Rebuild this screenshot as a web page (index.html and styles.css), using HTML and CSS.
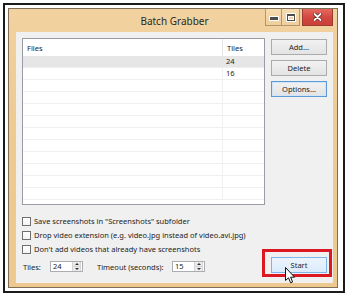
FILE: index.html
```html
<!DOCTYPE html>
<html>
<head>
<meta charset="utf-8">
<title>Batch Grabber</title>
<link rel="stylesheet" href="styles.css">
</head>
<body>
<div class="shot">
  <div class="window">
    <div class="titlebar">
      <div class="title">Batch Grabber</div>
      <div class="caption">
        <div class="cbtn cmin"><span class="min-glyph"></span></div>
        <div class="cbtn cmax"><span class="max-glyph"></span></div>
        <div class="cbtn cclose">
          <svg width="9" height="8" viewBox="0 0 9 8"><path d="M1.5 1 L7.5 7 M7.5 1 L1.5 7" stroke="#5a1d18" stroke-width="3.2" stroke-linecap="round"/><path d="M1.5 1 L7.5 7 M7.5 1 L1.5 7" stroke="#fff" stroke-width="1.8" stroke-linecap="round"/></svg>
        </div>
      </div>
    </div>
    <div class="client">
      <div class="top">
        <div class="listview">
          <div class="lv-head"><div class="c1">Files</div><div class="c2">Tiles</div></div>
          <div class="lv-row sel"><div class="c1"></div><div class="c2">24</div></div>
          <div class="lv-row"><div class="c1"></div><div class="c2">16</div></div>
          <div class="lv-row"><div class="c1"></div><div class="c2"></div></div>
          <div class="lv-row"><div class="c1"></div><div class="c2"></div></div>
          <div class="lv-row"><div class="c1"></div><div class="c2"></div></div>
          <div class="lv-row"><div class="c1"></div><div class="c2"></div></div>
          <div class="lv-row"><div class="c1"></div><div class="c2"></div></div>
          <div class="lv-row"><div class="c1"></div><div class="c2"></div></div>
          <div class="lv-row"><div class="c1"></div><div class="c2"></div></div>
          <div class="lv-row"><div class="c1"></div><div class="c2"></div></div>
          <div class="lv-row"><div class="c1"></div><div class="c2"></div></div>
          <div class="lv-row"><div class="c1"></div><div class="c2"></div></div>
        </div>
        <div class="side">
          <div class="btn">Add...</div>
          <div class="btn">Delete</div>
          <div class="btn focus">Options...</div>
        </div>
      </div>
      <div class="bottom">
        <div class="left">
          <div class="chk"><span class="box"></span><span>Save screenshots in "Screenshots" subfolder</span></div>
          <div class="chk"><span class="box"></span><span>Drop video extension (e.g. video.jpg instead of video.avi.jpg)</span></div>
          <div class="chk"><span class="box"></span><span>Don't add videos that already have screenshots</span></div>
          <div class="bar">
            <span class="lbl-tiles">Tiles:</span>
            <div class="spin"><span class="val">24</span><div class="arrows"><span class="up"></span><span class="down"></span></div></div>
            <span class="lbl-timeout">Timeout (seconds):</span>
            <div class="spin"><span class="val">15</span><div class="arrows"><span class="up"></span><span class="down"></span></div></div>
          </div>
        </div>
        <div class="start-wrap">
          <div class="btn start">Start</div>
          <div class="highlight"></div>
        </div>
      </div>
    </div>
  </div>
</div>
<svg class="cursor" width="11" height="17" viewBox="0 0 11 17">
  <path d="M0.5 0.5 L0.5 13.5 L3.5 10.8 L5.6 15.8 L7.6 15 L5.6 10.2 L9.6 10.2 Z" fill="#fff" stroke="#111" stroke-width="1" stroke-linejoin="round"/>
</svg>
</body>
</html>
```
FILE: styles.css
```css
* { box-sizing: border-box; }
html, body { margin: 0; background: #fff; }
body {
  font-family: "Noto Sans", "Open Sans", sans-serif;
  font-size: 7.5px;
  color: #1c1c1c;
  position: relative;
  width: 350px;
  height: 296px;
  overflow: hidden;
}
.shot {
  margin: 3px;
  width: 342px;
  height: 290px;
  border: 2px solid #1b1b1b;
  padding: 3px 5px 3px 3px;
}
.window {
  width: 330px;
  height: 280px;
  border: 1px solid #7f6e55;
  background: linear-gradient(180deg, #f2d2a0 0%, #eecb93 40%, #edc88f 100%);
  display: flex;
  flex-direction: column;
  padding: 0 4px 4px 7px;
}
.titlebar {
  height: 23px;
  display: grid;
  grid-template-columns: 68px 1fr 68px;
}
.title {
  grid-column: 2;
  text-align: center;
  font-size: 10px;
  line-height: 12px;
  padding-top: 6px;
  color: #2a2a2a;
}
.caption {
  grid-column: 3;
  display: flex;
  justify-content: flex-end;
  align-items: flex-start;
  gap: 1px;
}
.cbtn {
  height: 17px;
  display: flex;
  align-items: center;
  justify-content: center;
}
.cmin, .cmax {
  border: 1px solid #b39670;
  border-top: none;
  background: linear-gradient(180deg, #f6dcb1, #efcf9b);
}
.cmin { width: 17px; }
.cmax { width: 18px; border-left: none; margin-left: -1px; }
.min-glyph {
  width: 8px;
  height: 3px;
  margin-top: 3px;
  background: #4d4d4d;
  box-shadow: 0 0 0 1px #fff;
}
.max-glyph {
  width: 8px;
  height: 7px;
  border: 1px solid #4d4d4d;
  border-top-width: 2px;
  box-shadow: 0 0 0 1px #fff, inset 0 0 0 1px #fff;
}
.cclose {
  width: 31px;
  margin-left: 1px;
  background: linear-gradient(180deg, #e36a62 0%, #d2473f 55%, #c8413a 100%);
  border: 1px solid #9d3a32;
  border-top: none;
}
.client {
  flex: 1;
  background: #f0f0f0;
  padding: 6px 6px 10px 6px;
  display: flex;
  flex-direction: column;
}
.top {
  display: flex;
  gap: 6px;
  height: 167px;
}
.listview {
  width: 243px;
  border: 1px solid #9a9ca3;
  background: #fff;
  overflow: hidden;
}
.lv-head, .lv-row {
  display: grid;
  grid-template-columns: 199px 1fr;
}
.lv-head {
  height: 17px;
  align-items: center;
}
.lv-head .c1 { padding-left: 4px; }
.lv-head .c2 {
  height: 100%;
  display: flex;
  align-items: center;
  border-left: 1px solid #e6e6e6;
  padding-left: 4px;
}
.lv-row {
  height: 12px;
  border-bottom: 1px solid #f0f0f0;
  line-height: 11px;
}
.lv-row .c2 {
  border-left: 1px solid #f0f0f0;
  padding-left: 3px;
}
.lv-row.sel { background: #e6e6e6; }
.lv-row.sel .c2 { border-left-color: #e6e6e6; }
.side {
  display: flex;
  flex-direction: column;
  gap: 5px;
  padding-top: 1px;
}
.btn {
  width: 56px;
  height: 16px;
  border: 1px solid #acacac;
  background: linear-gradient(180deg, #f2f2f2, #e3e3e3);
  display: flex;
  align-items: center;
  justify-content: center;
  color: #1c1c1c;
}
.btn.focus {
  border-color: #5a9ad8;
  box-shadow: inset 0 0 0 1px #d2e5f7;
}
.bottom {
  margin-top: 9px;
  display: grid;
  grid-template-columns: 1fr 56px;
  align-items: end;
}
.left {
  display: flex;
  flex-direction: column;
  padding-bottom: 1px;
}
.chk {
  height: 14px;
  display: flex;
  align-items: center;
  gap: 3px;
}
.box {
  width: 9px;
  height: 9px;
  border: 1px solid #707070;
  background: linear-gradient(180deg, #ffffff, #f4f4f4);
}
.bar {
  margin-top: 5px;
  height: 11px;
  display: flex;
  align-items: center;
}
.lbl-tiles { padding-left: 1px; width: 28px; }
.lbl-timeout { margin-left: 14px; width: 75px; }
.spin {
  width: 33px;
  height: 11px;
  border: 1px solid #abadb3;
  background: #fff;
  display: flex;
  align-items: stretch;
}
.spin .val {
  flex: 1;
  padding-left: 2px;
  line-height: 9px;
}
.arrows {
  width: 9px;
  margin: 0 1px 0 0;
  display: flex;
  flex-direction: column;
  background: #ececec;
  border-left: 1px solid #d5d5d5;
  border-right: 1px solid #d5d5d5;
}
.arrows span {
  flex: 1;
  display: flex;
  align-items: center;
  justify-content: center;
}
.arrows .up { border-bottom: 1px solid #d5d5d5; }
.arrows .up::before {
  content: "";
  border-left: 2px solid transparent;
  border-right: 2px solid transparent;
  border-bottom: 2px solid #333;
}
.arrows .down::before {
  content: "";
  border-left: 2px solid transparent;
  border-right: 2px solid transparent;
  border-top: 2px solid #333;
}
.start-wrap {
  position: relative;
}
.btn.start {
  border-color: #7eb4ea;
  background: linear-gradient(180deg, #ecf4fc, #dcecfc);
}
.highlight {
  position: absolute;
  left: -9px;
  top: -8px;
  right: -5px;
  bottom: -4px;
  border: 3px solid #dc1820;
  pointer-events: none;
}
.cursor {
  position: absolute;
  left: 285px;
  top: 267px;
}
```
